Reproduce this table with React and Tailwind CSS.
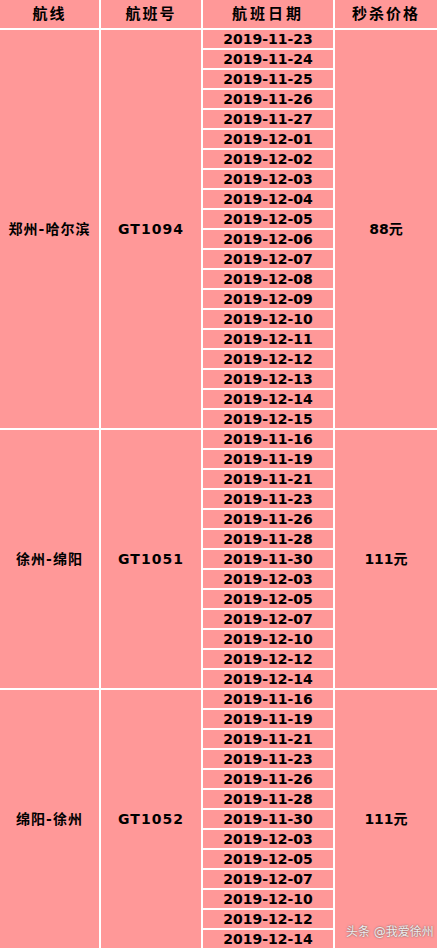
const groups = [
  {
    route: "郑州-哈尔滨",
    flight: "GT1094",
    price: "88元",
    dates: [
      "2019-11-23", "2019-11-24", "2019-11-25", "2019-11-26", "2019-11-27",
      "2019-12-01", "2019-12-02", "2019-12-03", "2019-12-04", "2019-12-05",
      "2019-12-06", "2019-12-07", "2019-12-08", "2019-12-09", "2019-12-10",
      "2019-12-11", "2019-12-12", "2019-12-13", "2019-12-14", "2019-12-15",
    ],
    span: "row-span-20",
  },
  {
    route: "徐州-绵阳",
    flight: "GT1051",
    price: "111元",
    dates: [
      "2019-11-16", "2019-11-19", "2019-11-21", "2019-11-23", "2019-11-26",
      "2019-11-28", "2019-11-30", "2019-12-03", "2019-12-05", "2019-12-07",
      "2019-12-10", "2019-12-12", "2019-12-14",
    ],
    span: "row-span-13",
  },
  {
    route: "绵阳-徐州",
    flight: "GT1052",
    price: "111元",
    dates: [
      "2019-11-16", "2019-11-19", "2019-11-21", "2019-11-23", "2019-11-26",
      "2019-11-28", "2019-11-30", "2019-12-03", "2019-12-05", "2019-12-07",
      "2019-12-10", "2019-12-12", "2019-12-14",
    ],
    span: "row-span-13",
  },
];

const cjk = { fontFamily: '"DejaVu Sans", "Noto Sans CJK SC", sans-serif' };

function Cell({ children, className = "" }) {
  return (
    <div className={"flex items-center justify-center bg-[#ff9898] text-black font-bold leading-none " + className}>
      {children}
    </div>
  );
}

export default function App() {
  return (
    <div className="relative w-[437px] h-[950px] overflow-hidden bg-white pb-[2px]" style={cjk}>
      <div className="grid grid-cols-[99px_100px_130px_102px] grid-rows-[28px] auto-rows-[18px] gap-[2px]">
        <Cell className="text-[15px] tracking-[2px]">航线</Cell>
        <Cell className="text-[15px] tracking-[2px]">航班号</Cell>
        <Cell className="text-[15px] tracking-[3px]">航班日期</Cell>
        <Cell className="text-[15px] tracking-[2px]">秒杀价格</Cell>
        {groups.map((g) => [
          <Cell key={g.flight + "r"} className={g.span + " text-[14px] tracking-[1px]"}>{g.route}</Cell>,
          <Cell key={g.flight + "f"} className={g.span + " text-[14px] tracking-[1px]"}>{g.flight}</Cell>,
          <Cell key={g.flight + "d0"} className="text-[14px]">{g.dates[0]}</Cell>,
          <Cell key={g.flight + "p"} className={g.span + " text-[14px]"}>{g.price}</Cell>,
          ...g.dates.slice(1).map((d, i) => (
            <Cell key={g.flight + "d" + (i + 1)} className="text-[14px]">{d}</Cell>
          )),
        ])}
      </div>
      <div className="absolute left-[346px] top-[926px] whitespace-nowrap text-[12px] leading-none text-[#eeeeee] [text-shadow:0_0_2px_#555]">
        头条 @我爱徐州
      </div>
    </div>
  );
}
